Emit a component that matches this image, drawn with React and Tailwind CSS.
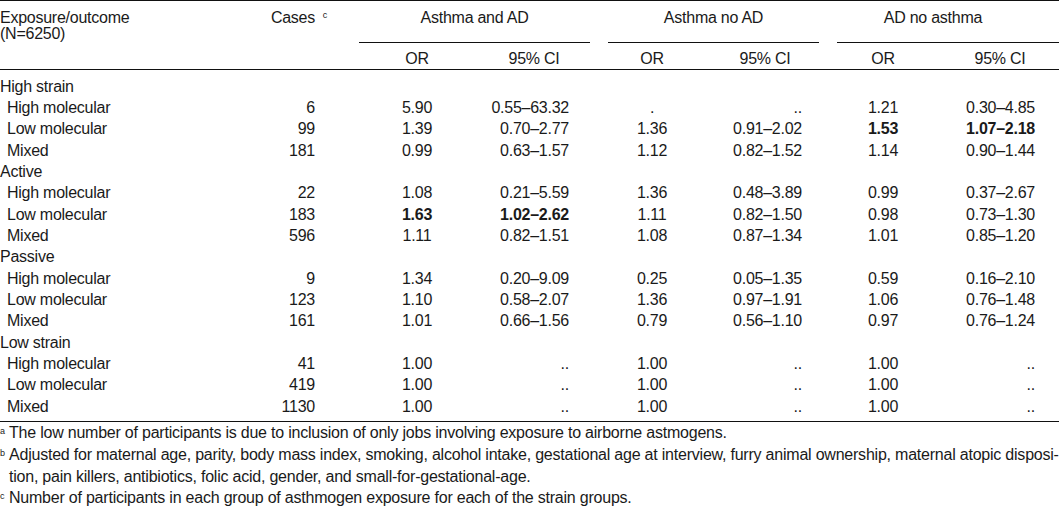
const COLS = 'grid grid-cols-[250px_109px_116px_124px_97px_132px_110px_121px]'

// per-column alignment for body cells
const CELL = [
  '',
  'text-right pr-[44px]',
  'text-center',
  'text-right pr-[30px]',
  'text-center pl-[9px]',
  'text-right pr-[26px]',
  'text-center px-[9px]',
  'text-right pr-[24px]',
]

const ROWS = [
  { label: 'High strain' },
  { label: 'High molecular', v: ['6', '5.90', '0.55–63.32', '.', '..', '1.21', '0.30–4.85'] },
  { label: 'Low molecular', v: ['99', '1.39', '0.70–2.77', '1.36', '0.91–2.02', '1.53', '1.07–2.18'], bold: [5, 6] },
  { label: 'Mixed', v: ['181', '0.99', '0.63–1.57', '1.12', '0.82–1.52', '1.14', '0.90–1.44'] },
  { label: 'Active' },
  { label: 'High molecular', v: ['22', '1.08', '0.21–5.59', '1.36', '0.48–3.89', '0.99', '0.37–2.67'] },
  { label: 'Low molecular', v: ['183', '1.63', '1.02–2.62', '1.11', '0.82–1.50', '0.98', '0.73–1.30'], bold: [1, 2] },
  { label: 'Mixed', v: ['596', '1.11', '0.82–1.51', '1.08', '0.87–1.34', '1.01', '0.85–1.20'] },
  { label: 'Passive' },
  { label: 'High molecular', v: ['9', '1.34', '0.20–9.09', '0.25', '0.05–1.35', '0.59', '0.16–2.10'] },
  { label: 'Low molecular', v: ['123', '1.10', '0.58–2.07', '1.36', '0.97–1.91', '1.06', '0.76–1.48'] },
  { label: 'Mixed', v: ['161', '1.01', '0.66–1.56', '0.79', '0.56–1.10', '0.97', '0.76–1.24'] },
  { label: 'Low strain' },
  { label: 'High molecular', v: ['41', '1.00', '..', '1.00', '..', '1.00', '..'] },
  { label: 'Low molecular', v: ['419', '1.00', '..', '1.00', '..', '1.00', '..'] },
  { label: 'Mixed', v: ['1130', '1.00', '..', '1.00', '..', '1.00', '..'] },
]

function Mark({ children }) {
  return <span className="inline-block w-[9px] shrink-0 pt-[5px] text-[9px] leading-none tracking-normal">{children}</span>
}

export default function App() {
  return (
    <div
      className="w-[1059px] h-[506px] overflow-hidden bg-white text-[#1a1a1a] text-[16px] tracking-[-0.25px]"
      style={{ fontFamily: '"Liberation Sans", Arial, sans-serif' }}
    >
      <div className="border-t border-[#111]" />

      {/* header */}
      <div className={`${COLS} grid-rows-[42px_26px] leading-[15.5px]`}>
        <div className="row-span-2 pt-[9.2px]">
          Exposure/outcome<br />(N=6250)
        </div>
        <div className="row-span-2 pt-[9.2px] text-right pr-[44px] whitespace-nowrap">
          Cases
          <span className="inline-block ml-[5px] -mr-[12px] w-[7px] align-[5px] text-[9px] leading-none">c</span>
        </div>
        <div className="col-span-2 mr-[9px] border-b border-[#111] pt-[9.2px] text-center">Asthma and AD</div>
        <div className="col-span-2 mx-[9px] border-b border-[#111] pt-[9.2px] text-center">Asthma no AD</div>
        <div className="col-span-2 ml-[9px] border-b border-[#111] pt-[9.2px] pr-[30px] text-center">AD no asthma</div>

        <div className="pt-[8.2px] text-center">OR</div>
        <div className="pt-[8.2px] pr-[6px] text-center">95% CI</div>
        <div className="pt-[8.2px] pl-[9px] text-center">OR</div>
        <div className="pt-[8.2px] pl-[6px] text-center">95% CI</div>
        <div className="pt-[8.2px] px-[9px] text-center">OR</div>
        <div className="pt-[8.2px] pl-[3px] text-center">95% CI</div>
      </div>

      <div className="border-t border-[#111]" />

      {/* body */}
      <div className="pt-[5.8px] pb-[3.9px] leading-[21.33px]">
        {ROWS.map((r, i) => (
          <div key={i} className={`${COLS} h-[21.33px] whitespace-nowrap`}>
            <div className={r.v ? 'pl-[7px]' : ''}>{r.label}</div>
            {r.v && r.v.map((val, j) => (
              <div key={j} className={`${CELL[j + 1]} ${r.bold?.includes(j) ? 'font-bold' : ''}`}>{val}</div>
            ))}
          </div>
        ))}
      </div>

      <div className="border-t border-[#111]" />

      {/* footnotes */}
      <div className="leading-[21.8px] tracking-[-0.22px] whitespace-nowrap">
        <div className="flex">
          <Mark>a</Mark>
          <span>The low number of participants is due to inclusion of only jobs involving exposure to airborne astmogens.</span>
        </div>
        <div className="flex">
          <Mark>b</Mark>
          <span>
            Adjusted for maternal age, parity, body mass index, smoking, alcohol intake, gestational age at interview, furry animal ownership, maternal atopic disposi-
            <br />
            tion, pain killers, antibiotics, folic acid, gender, and small-for-gestational-age.
          </span>
        </div>
        <div className="flex">
          <Mark>c</Mark>
          <span>Number of participants in each group of asthmogen exposure for each of the strain groups.</span>
        </div>
      </div>
    </div>
  )
}
